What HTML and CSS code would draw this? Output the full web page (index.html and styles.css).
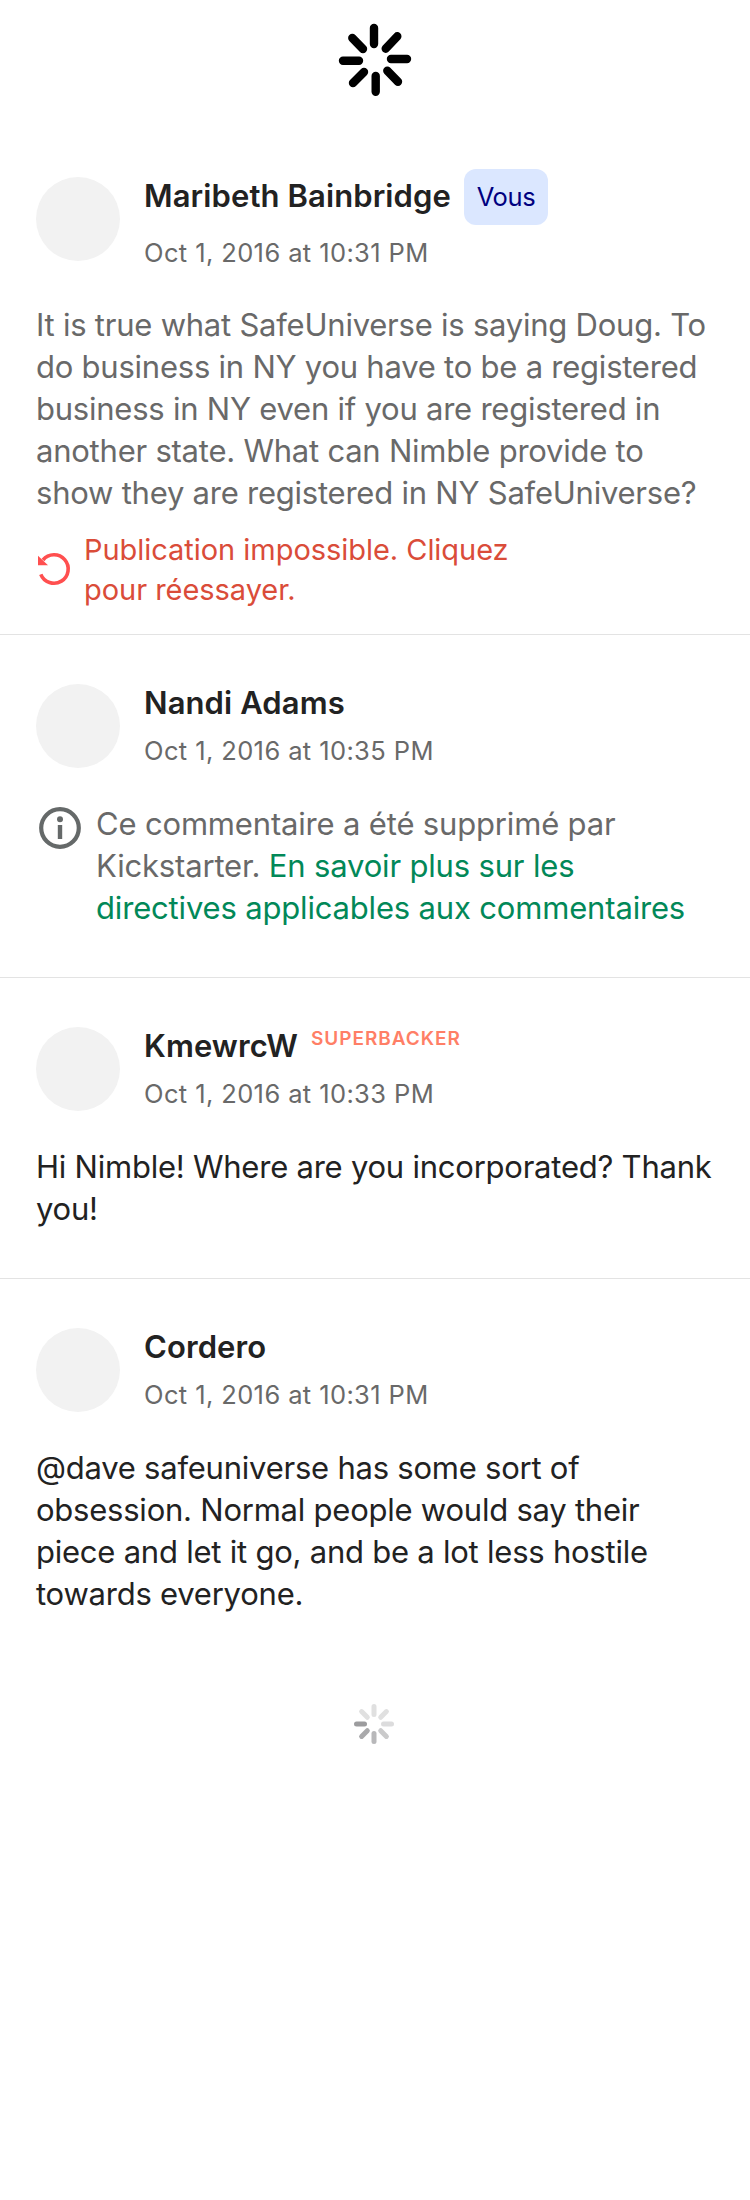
FILE: index.html
```html
<!DOCTYPE html>
<html lang="fr">
<head>
<meta charset="utf-8">
<title>Commentaires</title>
<link rel="stylesheet" href="styles.css">
</head>
<body>
<header class="top-loader">
  <svg class="spinner" viewBox="-37 -37 74 74"><path d="M-1-32V-16M.7 16V31.7M-32 .7H-16M16-1H32M10.7-11.3L22.3-23.7M-22.7-22L-12-11M-11 12L-22 23M12.3 10.7L23 21.7"/></svg>
</header>
<main>
  <article class="comment own">
    <div class="author">
      <div class="avatar"></div>
      <div class="meta">
        <div class="name-row"><h2>Maribeth Bainbridge</h2><span class="you">Vous</span></div>
        <time>Oct 1, 2016 at 10:31 PM</time>
      </div>
    </div>
    <p class="body muted">It is true what SafeUniverse is saying Doug. To<br>do business in NY you have to be a registered<br>business in NY even if you are registered in<br>another state. What can Nimble provide to<br>show they are registered in NY SafeUniverse?</p>
    <div class="error">
      <svg class="retry" viewBox="0 0 32 32"><path class="arc" d="M5 7A14.2 14.2 0 1 1 2.8 21.3"/><path class="head" d="M0 2.7V12.3H10Z"/></svg>
      <p>Publication impossible. Cliquez<br>pour réessayer.</p>
    </div>
  </article>
  <article class="comment">
    <div class="author">
      <div class="avatar"></div>
      <div class="meta">
        <div class="name-row"><h2>Nandi Adams</h2></div>
        <time>Oct 1, 2016 at 10:35 PM</time>
      </div>
    </div>
    <div class="notice">
      <svg class="info" viewBox="0 0 42 42"><circle class="ring" cx="21" cy="21" r="18.8"/><circle cx="21" cy="12.3" r="3"/><path d="M18.8 18H23.2V32H18.8Z"/></svg>
      <p class="body muted">Ce commentaire a été supprimé par<br>Kickstarter. <a class="link">En savoir plus sur les<br>directives applicables aux commentaires</a></p>
    </div>
  </article>
  <article class="comment">
    <div class="author">
      <div class="avatar"></div>
      <div class="meta">
        <div class="name-row"><h2>KmewrcW</h2><span class="badge">SUPERBACKER</span></div>
        <time>Oct 1, 2016 at 10:33 PM</time>
      </div>
    </div>
    <p class="body">Hi Nimble! Where are you incorporated? Thank<br>you!</p>
  </article>
  <article class="comment last">
    <div class="author">
      <div class="avatar"></div>
      <div class="meta">
        <div class="name-row"><h2>Cordero</h2></div>
        <time>Oct 1, 2016 at 10:31 PM</time>
      </div>
    </div>
    <p class="body">@dave safeuniverse has some sort of<br>obsession. Normal people would say their<br>piece and let it go, and be a lot less hostile<br>towards everyone.</p>
  </article>
</main>
<footer class="more-loader">
  <svg class="spinner-small" viewBox="-20 -20 40 40">
    <path class="s1" d="M-17.5 0H-9.5"/>
    <path class="s2" d="M-12.4 12.4L-6.7 6.7"/>
    <path class="s3" d="M0 17.5V9.5"/>
    <path class="s4" d="M12.4 12.4L6.7 6.7"/>
    <path class="s5" d="M17.5 0H9.5"/>
    <path class="s6" d="M12.4-12.4L6.7-6.7M0-17.5V-9.5M-12.4-12.4L-6.7-6.7"/>
  </svg>
</footer>
</body>
</html>
```
FILE: styles.css
```css
* { box-sizing: border-box; }
body { margin: 0; background: #fff; color: #222; font-family: Inter, sans-serif; }
h2, p { margin: 0; }
svg { display: block; flex: none; }

.top-loader { height: 120px; padding-top: 23px; }
.spinner { width: 74px; height: 74px; margin: 0 auto; fill: none; stroke: #000; stroke-width: 8.4; stroke-linecap: round; }

.comment { padding: 49px 0 48px 36px; border-bottom: 1px solid #e3e3e3; white-space: nowrap; }
.comment.own { padding-bottom: 24px; }
.comment.last { padding-bottom: 0; border-bottom: 0; }

.author { display: flex; align-items: flex-start; gap: 24px; min-height: 84px; margin-bottom: 35px; }
.avatar { width: 84px; height: 84px; flex: none; border-radius: 50%; background: #f2f2f2; }
.own .avatar { margin-top: 8px; }
.meta { display: flex; flex-direction: column; gap: 13px; }
.own .meta { gap: 12px; }
.name-row { display: flex; align-items: flex-start; gap: 13px; }
h2 { font-size: 31px; font-weight: 600; line-height: 38px; letter-spacing: 0.1px; }
.own h2 { padding-top: 8px; }
time { display: block; font-size: 25.5px; line-height: 32px; letter-spacing: 0.39px; color: #696969; }
.you { width: 84px; height: 56px; line-height: 56px; text-align: center; font-size: 25.5px; letter-spacing: -0.4px; background: #dbe7ff; color: #000080; border-radius: 12px; }
.badge { font-size: 19px; font-weight: 600; line-height: 24px; letter-spacing: 0.95px; color: #ff7f66; }

.body { font-size: 31px; line-height: 42px; letter-spacing: -0.23px; }
.notice .body { letter-spacing: -0.17px; }
.muted { color: #696969; }
.link { color: #028858; }

.error { display: flex; gap: 14px; margin-top: 16px; padding-left: 2px; font-size: 29px; line-height: 40px; letter-spacing: -0.04px; color: #da4c39; }
.retry { width: 32px; height: 32px; margin-top: 23px; overflow: visible; fill: #ff4f4f; }
.retry .arc { fill: none; stroke: #ff4f4f; stroke-width: 3.6; }

.notice { display: flex; gap: 15px; padding-left: 3px; }
.info { width: 42px; height: 42px; margin-top: 4px; fill: #656969; }
.info .ring { fill: none; stroke: #656969; stroke-width: 4.2; }

.more-loader { padding: 89px 2px 0 0; }
.spinner-small { width: 40px; height: 40px; margin: 0 auto; fill: none; stroke-width: 5; stroke-linecap: round; }
.s1 { stroke: #9c9c9e; }
.s2 { stroke: #a9a9ab; }
.s3 { stroke: #b8b8ba; }
.s4 { stroke: #cacacb; }
.s5 { stroke: #dcdcdd; }
.s6 { stroke: #e0e0e0; }
```
